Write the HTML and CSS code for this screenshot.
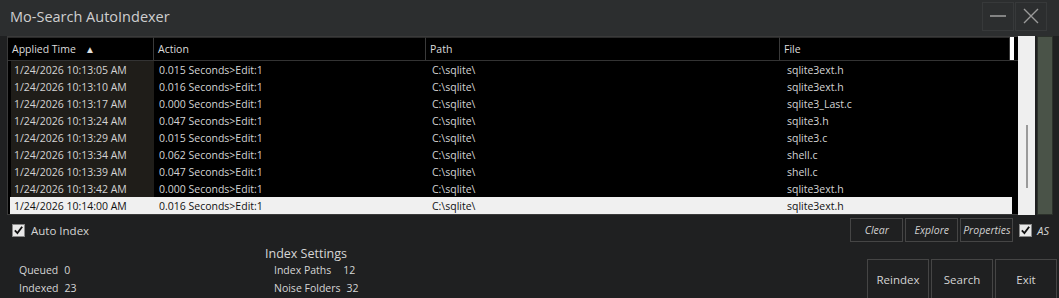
FILE: index.html
```html
<!DOCTYPE html>
<html lang="en">
<head>
  <meta charset="UTF-8">
  <title>Mo-Search AutoIndexer</title>
  <link rel="stylesheet" href="styles.css">
</head>
<body>
  <div class="window">
    <div class="titlebar">
      <div class="title">Mo-Search AutoIndexer</div>
      <div class="win-buttons">
        <div class="win-btn">
          <svg width="18" height="18" viewBox="0 0 18 18"><path d="M1 9 H17" stroke="#9a9a9a" stroke-width="1.6"/></svg>
        </div>
        <div class="win-btn">
          <svg width="18" height="18" viewBox="0 0 18 18"><path d="M2 2 L16 16 M16 2 L2 16" stroke="#9a9a9a" stroke-width="1.4"/></svg>
        </div>
      </div>
    </div>

    <div class="main">
      <div class="list">
        <div class="list-head">
          <div class="hcell c1">Applied Time <span class="sort">&#9650;</span></div>
          <div class="hcell c2">Action</div>
          <div class="hcell c3">Path</div>
          <div class="hcell c4">File</div>
          <div class="head-end"></div>
        </div>
        <div class="rows" id="rows"></div>
      </div>
      <div class="vscroll"><div class="thumb"></div></div>
      <div class="side-panel"></div>
    </div>

    <div class="toolbar">
      <label class="check">
        <span class="box"><svg width="12" height="12" viewBox="0 0 12 12"><path d="M2 6.5 L4.8 9.3 L10 2.5" stroke="#111" stroke-width="2" fill="none"/></svg></span>
        Auto Index
      </label>
      <div class="tools">
        <div class="tbtn">Clear</div>
        <div class="tbtn">Explore</div>
        <div class="tbtn">Properties</div>
        <label class="check as">
          <span class="box"><svg width="12" height="12" viewBox="0 0 12 12"><path d="M2 6.5 L4.8 9.3 L10 2.5" stroke="#111" stroke-width="2" fill="none"/></svg></span>
          AS
        </label>
      </div>
    </div>

    <div class="footer">
      <div class="stats">
        <div class="stat"><span>Queued</span><span>0</span></div>
        <div class="stat"><span>Indexed</span><span>23</span></div>
      </div>
      <div class="settings">
        <div class="settings-title">Index Settings</div>
        <div class="stat"><span>Index Paths</span><span class="num">12</span></div>
        <div class="stat"><span>Noise Folders</span><span>32</span></div>
      </div>
      <div class="actions">
        <div class="abtn">Reindex</div>
        <div class="abtn">Search</div>
        <div class="abtn">Exit</div>
      </div>
    </div>
  </div>

  <script>
    const entries = [
      ["1/24/2026 10:13:05 AM", "0.015", "sqlite3ext.h"],
      ["1/24/2026 10:13:10 AM", "0.016", "sqlite3ext.h"],
      ["1/24/2026 10:13:17 AM", "0.000", "sqlite3_Last.c"],
      ["1/24/2026 10:13:24 AM", "0.047", "sqlite3.h"],
      ["1/24/2026 10:13:29 AM", "0.015", "sqlite3.c"],
      ["1/24/2026 10:13:34 AM", "0.062", "shell.c"],
      ["1/24/2026 10:13:39 AM", "0.047", "shell.c"],
      ["1/24/2026 10:13:42 AM", "0.000", "sqlite3ext.h"],
      ["1/24/2026 10:14:00 AM", "0.016", "sqlite3ext.h"]
    ];
    const rows = document.getElementById("rows");
    entries.forEach((e, i) => {
      const row = document.createElement("div");
      row.className = "row" + (i === entries.length - 1 ? " selected" : "");
      row.innerHTML =
        `<div class="cell c1">${e[0]}</div>` +
        `<div class="cell c2">${e[1]} Seconds&gt;Edit:1</div>` +
        `<div class="cell c3">C:\\sqlite\\</div>` +
        `<div class="cell c4">${e[2]}</div>`;
      rows.appendChild(row);
    });
  </script>
</body>
</html>
```

FILE: styles.css
```css
body {
  margin: 0;
  background-color: #1f2021;
  font-family: "Open Sans", "Noto Sans", sans-serif;
  color: #d6d6d6;
  overflow: hidden;
}

.window {
  width: 1059px;
  height: 298px;
  display: flex;
  flex-direction: column;
  overflow: hidden;
}

/* Title bar */
.titlebar {
  flex-shrink: 0;
  height: 36px;
  background-color: #2c2e2f;
  display: flex;
  align-items: center;
  justify-content: space-between;
  padding: 0 12px 0 10px;
  box-sizing: border-box;
}

.title {
  font-size: 14.5px;
  color: #cfcfcf;
  margin-top: -4px;
}

.win-buttons {
  display: flex;
  gap: 1px;
  margin-top: -4px;
}

.win-btn {
  width: 30px;
  height: 27px;
  border: 1px solid #37393a;
  display: flex;
  align-items: center;
  justify-content: center;
}

/* List area */
.main {
  flex-shrink: 0;
  display: flex;
  height: 179px;
  padding-left: 7px;
  box-sizing: border-box;
}

.list {
  width: 1011px;
  background-color: #000;
  border: 1px solid #3a3a3a;
  border-right: none;
  box-sizing: border-box;
  font-size: 10.5px;
  overflow: hidden;
}

.list-head {
  display: flex;
  height: 24px;
  border-bottom: 1px solid #333;
  box-sizing: border-box;
}

.hcell {
  display: flex;
  align-items: center;
  padding-left: 4px;
  color: #dcdcdc;
  border-right: 1px solid #3a3a3a;
  border-top: 1px solid #2a2a2a;
  box-sizing: border-box;
}

.sort {
  font-size: 10px;
  margin-left: 9px;
  color: #e0e0e0;
}

.c1 { width: 146px; }
.c2 { width: 272px; }
.c3 { width: 354px; }
.c4 { width: 230px; }

.head-end {
  width: 4px;
  background-color: #fff;
}

.rows {
  padding-top: 0;
}

.row {
  display: flex;
  height: 17px;
  align-items: center;
  margin-right: 6px;
}

.cell {
  padding-left: 4px;
  box-sizing: border-box;
  white-space: nowrap;
  color: #d4d4d4;
}

.row .c1 {
  background-color: #1f1d19;
  height: 100%;
  display: flex;
  align-items: center;
  margin-left: 3px;
  width: 143px;
  padding-left: 3px;
}

.row .c2 { padding-left: 5px; }
.row .c3 { padding-left: 6px; }
.row .c4 { padding-left: 7px; }

.row.selected {
  background-color: #f0f0f0;
  margin-left: 2px;
}

.row.selected .cell {
  color: #111;
}

.row.selected .c1 {
  background-color: transparent;
  margin-left: 1px;
}

.vscroll {
  width: 17px;
  background-color: #efefef;
  display: flex;
  justify-content: center;
  padding-top: 89px;
  box-sizing: border-box;
}

.thumb {
  width: 2px;
  height: 63px;
  background-color: #9a9a9a;
}

.side-panel {
  width: 16px;
  margin-left: 2px;
  background-color: #4a5348;
  border: 1px solid #2c312b;
  box-sizing: border-box;
}

/* Toolbar */
.toolbar {
  flex-shrink: 0;
  display: flex;
  justify-content: space-between;
  align-items: center;
  height: 30px;
  padding: 0 10px 0 12px;
  box-sizing: border-box;
}

.check {
  display: flex;
  align-items: center;
  gap: 6px;
  font-size: 11.5px;
  color: #d4d4d4;
}

.box {
  width: 13px;
  height: 13px;
  background-color: #e8e8e8;
  border: 1px solid #888;
  box-sizing: border-box;
  display: flex;
  align-items: center;
  justify-content: center;
}

.tools {
  display: flex;
  align-items: center;
  gap: 2px;
}

.tbtn {
  width: 53px;
  height: 24px;
  border: 1px solid #454545;
  box-sizing: border-box;
  display: flex;
  align-items: center;
  justify-content: center;
  font-size: 10.5px;
  font-style: italic;
  color: #cfcfcf;
}

.check.as {
  margin-left: 4px;
  gap: 5px;
  font-style: italic;
  font-size: 11px;
}

/* Footer */
.footer {
  flex: 1;
  min-height: 0;
  display: flex;
  align-items: flex-start;
  font-size: 10.5px;
}

.stats {
  width: 255px;
  padding: 16px 0 0 19px;
  box-sizing: border-box;
}

.stat {
  display: flex;
  gap: 6px;
  height: 18px;
  align-items: center;
}

.stat .num {
  margin-left: 6px;
}

.settings {
  width: 600px;
  padding: 1px 0 0 10px;
  box-sizing: border-box;
}

.settings-title {
  font-size: 12.5px;
  height: 15px;
  line-height: 16px;
}

.settings .stat {
  padding-left: 9px;
}

.actions {
  display: flex;
  gap: 2px;
  margin: 14px 2px 0 auto;
}

.abtn {
  width: 62px;
  height: 40px;
  border: 1px solid #454545;
  box-sizing: border-box;
  display: flex;
  align-items: center;
  justify-content: center;
  font-size: 11.5px;
  color: #d4d4d4;
}
```
